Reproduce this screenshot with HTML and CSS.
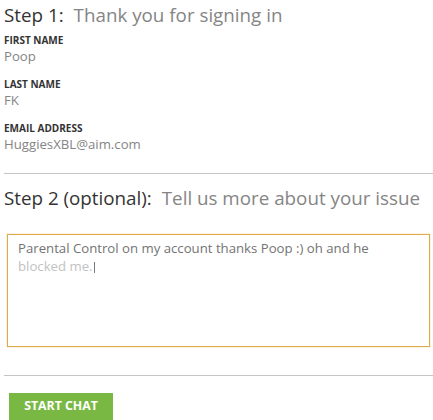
FILE: index.html
```html
<!DOCTYPE html>
<html>
<head>
<meta charset="utf-8">
<link rel="stylesheet" href="styles.css">
</head>
<body>
<div class="page">
  <h2 class="step"><span class="step-num">Step 1:</span><span class="step-desc">Thank you for signing in</span></h2>
  <div class="fields">
    <div class="field"><div class="label">FIRST NAME</div><div class="value">Poop</div></div>
    <div class="field"><div class="label">LAST NAME</div><div class="value">FK</div></div>
    <div class="field"><div class="label">EMAIL ADDRESS</div><div class="value">HuggiesXBL@aim.com</div></div>
  </div>
  <hr class="divider first">
  <h2 class="step second"><span class="step-num">Step 2 (optional):</span><span class="step-desc">Tell us more about your issue</span></h2>
  <div class="issue-box"><span class="typed">Parental Control on my account thanks Poop :) oh and he</span><br><span class="typed-faint">blocked me.</span><span class="caret"></span></div>
  <hr class="divider second">
  <button class="start-chat">START CHAT</button>
</div>
</body>
</html>
```
FILE: styles.css
```css
html, body {
  margin: 0;
  padding: 0;
  background: #ffffff;
}
body {
  font-family: "Open Sans", "Noto Sans", sans-serif;
}
.page {
  padding: 3px 0 0 4px;
}
.step {
  margin: 0;
  font-size: 18.8px;
  line-height: 24px;
  font-weight: 400;
  white-space: nowrap;
}
.step-num {
  color: #333333;
  margin-right: 10px;
}
.step-desc {
  color: #858585;
}
.fields {
  margin-top: 6px;
}
.field {
  margin-bottom: 12px;
}
.field:last-child {
  margin-bottom: 0;
}
.label {
  font-size: 10px;
  line-height: 14px;
  font-weight: 700;
  color: #333333;
}
.value {
  font-size: 13.2px;
  line-height: 18px;
  color: #858585;
}
.divider {
  border: 0;
  height: 1px;
  background: #c4c4c4;
  margin: 0;
}
.divider.first {
  margin-top: 20px;
}
.step.second {
  margin-top: 12px;
}
.issue-box {
  margin: 24px 3px 0 3px;
  border: 1px solid #ddaa4e;
  box-shadow: 0 0 1px 0 rgba(228, 170, 70, 0.9);
  padding: 4px 10px 0 10px;
  font-size: 13.2px;
  line-height: 18.4px;
  color: #737373;
  box-sizing: content-box;
  height: 107px;
  white-space: nowrap;
}
.typed-faint {
  color: #c2c2c2;
}
.caret {
  display: inline-block;
  width: 1px;
  height: 11px;
  background: #7a7a7a;
  vertical-align: -2px;
  margin-left: 1px;
}
.divider.second {
  margin-top: 28px;
}
.start-chat {
  display: block;
  margin: 17px 0 0 5px;
  width: 104px;
  border: 0;
  padding: 5px 0 9px 0;
  line-height: 16px;
  background: #79b943;
  color: #ffffff;
  font-family: "Open Sans", "Noto Sans", sans-serif;
  font-size: 12.3px;
  font-weight: 700;
}
```
